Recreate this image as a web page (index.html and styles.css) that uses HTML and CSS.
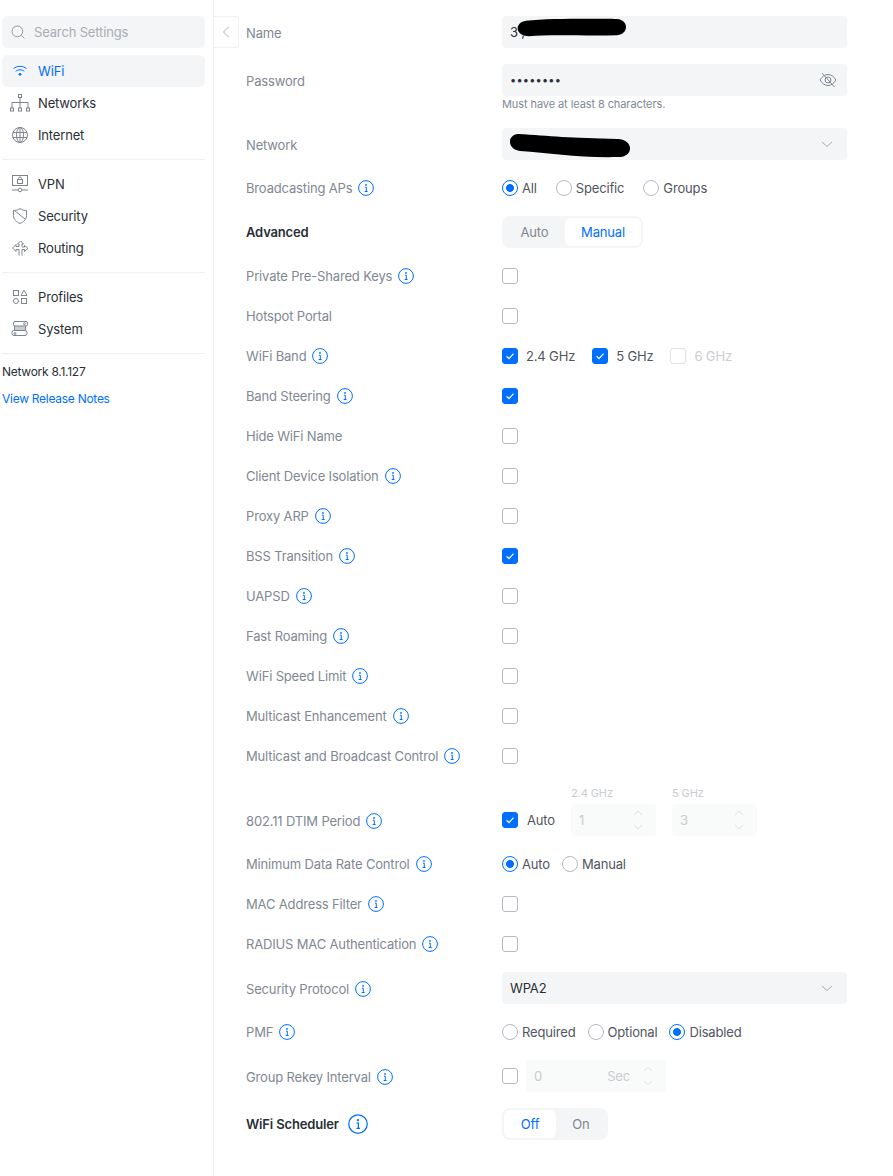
FILE: index.html
```html
<!DOCTYPE html>
<html lang="en">
<head>
<meta charset="utf-8">
<title>WiFi Settings</title>
<link rel="stylesheet" href="styles.css">
</head>
<body>
<svg class="defs" width="0" height="0" aria-hidden="true">
  <symbol id="info" viewBox="0 0 16 16"><circle cx="8" cy="8" r="7.4" fill="none" stroke="#006fff"/><circle cx="8" cy="4.9" r=".9" fill="#006fff"/><path d="M6.9 7.2H8.3V11.4M6.7 11.5H9.6" fill="none" stroke="#006fff"/></symbol>
  <symbol id="tick" viewBox="0 0 16 16"><path d="M4.6 8.3 7 10.6l4.5-5" fill="none" stroke="#fff" stroke-width="1.2"/></symbol>
  <symbol id="chev" viewBox="0 0 16 16"><path d="M3 6l5 4.5L13 6" fill="none" stroke="currentColor"/></symbol>
  <symbol id="up" viewBox="0 0 10 6"><path d="M1 5 5 1.2 9 5" fill="none" stroke="currentColor"/></symbol>
  <symbol id="down" viewBox="0 0 10 6"><path d="M1 1 5 4.8 9 1" fill="none" stroke="currentColor"/></symbol>
</svg>
<div class="page">
  <aside class="sidebar">
    <div class="search">
      <svg class="ico" viewBox="0 0 20 20"><circle cx="9.2" cy="9.2" r="6.7" fill="none" stroke="currentColor"/><path d="M14 14l4 4" stroke="currentColor" fill="none"/></svg>
      <span>Search Settings</span>
    </div>
    <nav class="group">
      <a class="item active"><svg class="ico" viewBox="0 0 20 20"><path d="M3.5 7.6C7 4.6 13 4.6 16.500 7.600M5.700 10.300c2.500-2 6.100-2 8.600 0" fill="none" stroke="currentColor"/><circle cx="10" cy="13.300" r="1.400" fill="currentColor"/></svg>WiFi</a>
      <a class="item"><svg class="ico" viewBox="0 0 20 20"><g fill="none" stroke="currentColor"><rect x="8.500" y="1.500" width="3" height="3"/><path d="M10 4.500V15M2 15.500V9.500H18V15.500"/><rect x=".5" y="15" width="3" height="3"/><rect x="8.500" y="15" width="3" height="3"/><rect x="16.500" y="15" width="3" height="3"/></g></svg>Networks</a>
      <a class="item"><svg class="ico" viewBox="0 0 20 20"><g fill="none" stroke="currentColor"><circle cx="10" cy="10" r="7.500"/><ellipse cx="10" cy="10" rx="3.500" ry="7.500"/><path d="M10 2.500v15M3 7.500h14M3 12.500h14"/></g></svg>Internet</a>
    </nav>
    <nav class="group">
      <a class="item"><svg class="ico" viewBox="0 0 20 20"><g fill="none" stroke="currentColor"><rect x="2.500" y="1.500" width="15" height="10"/><rect x="7.500" y="5.500" width="5" height="4"/><path d="M8.500 5.500V4.500a1.500 1.500 0 0 1 3 0v1M2 16h6M12 16h6"/><circle cx="10" cy="16" r="1.800"/></g></svg>VPN</a>
      <a class="item"><svg class="ico" viewBox="0 0 20 20"><g fill="none" stroke="currentColor"><path d="M10 2.500c2 1.500 4.500 2 6.500 2v5c0 4-3 6.500-6.500 8-3.500-1.500-6.500-4-6.500-8v-5c2 0 4.500-.5 6.500-2z"/><path d="M5 5l10 8"/></g></svg>Security</a>
      <a class="item"><svg class="ico" viewBox="0 0 20 20"><g fill="none" stroke="currentColor"><path d="M10.500 3 7.500 6H9V8.500H6V6.500L2.500 10 6 13.500V11.500H9V17.500M10.500 3l3 3H12V8.500M12 17.500V11.500H14.500V13.500L18 10.500 14.500 7.500V9H12"/></g></svg>Routing</a>
    </nav>
    <nav class="group">
      <a class="item"><svg class="ico" viewBox="0 0 20 20"><g fill="none" stroke="currentColor"><rect x="3.500" y="3.500" width="5" height="5"/><path d="M14 3.200l3 5.300h-6z"/><circle cx="6" cy="14" r="2.500"/><rect x="11.500" y="11.500" width="5" height="5"/></g></svg>Profiles</a>
      <a class="item"><svg class="ico" viewBox="0 0 20 20"><rect x="5" y="7" width="10" height="5" fill="#c9ccd1"/><g fill="none" stroke="currentColor"><path d="M5 2.500h11a1.500 1.500 0 0 1 1.500 1.500v1.500a1.500 1.500 0 0 1-1.500 1.500H5a1.500 1.500 0 0 1-1.500-1.500V4A1.500 1.500 0 0 1 5 2.500zM4 11.500h11a2 2 0 0 1 2 2v1a2 2 0 0 1-2 2H4a2 2 0 0 1-2-2v-1a2 2 0 0 1 2-2z"/><path d="M4.500 7v4.500M15.500 7v4.500"/><circle cx="14.500" cy="4.700" r="1"/><circle cx="5" cy="14.500" r="1"/></g></svg>System</a>
    </nav>
    <p class="version">Network 8.1.127</p>
    <a class="notes">View Release Notes</a>
  </aside>

  <div class="collapse"><svg viewBox="0 0 10 14"><path d="M7.500 2 2.500 7l5 5" fill="none" stroke="currentColor"/></svg></div>

  <main class="form">
    <div class="row field"><span class="label nudge">Name</span>
      <div class="input"><span>3 ,</span><svg class="blob blob-a" viewBox="0 0 110 22" preserveAspectRatio="none"><path d="M9 3 C35 0 85 1 100 1 C112 2 112 18 100 19 C70 20 35 18 12 20 C-2 20 -3 5 9 3z" fill="#000"/></svg></div></div>
    <div class="row field"><span class="label nudge">Password</span>
      <div class="input"><span class="dots">••••••••</span><svg class="eye" viewBox="0 0 18 18"><g fill="none" stroke="currentColor"><path d="M1 9c2-3.500 5-5.500 8-5.500s6 2 8 5.500c-2 3.500-5 5.500-8 5.500S3 12.500 1 9z"/><circle cx="9" cy="9" r="3"/><path d="M3 2l12.500 14"/></g></svg></div></div>
    <div class="row helper"><span></span><small>Must have at least 8 characters.</small></div>
    <div class="row field"><span class="label nudge">Network</span>
      <div class="input"><svg class="blob blob-b" viewBox="0 0 120 25" preserveAspectRatio="none"><path d="M8 1 C40 3 60 5 108 6 C124 7 124 24 108 24 C70 25 40 20 10 18 C-3 16 -3 2 8 1z" fill="#000"/></svg><svg class="chev"><use href="#chev"/></svg></div></div>
    <div class="row short"><span class="label">Broadcasting APs <svg class="info"><use href="#info"/></svg></span>
      <div class="opts wide"><span class="opt"><i class="radio on"></i>All</span><span class="opt"><i class="radio"></i>Specific</span><span class="opt"><i class="radio"></i>Groups</span></div></div>
    <div class="row field advanced"><span class="label strong">Advanced</span>
      <div class="seg"><span class="seg-btn auto">Auto</span><span class="seg-btn manual sel">Manual</span></div></div>

    <div class="checks">
      <div class="row"><span class="label">Private Pre-Shared Keys <svg class="info"><use href="#info"/></svg></span><i class="box"></i></div>
      <div class="row"><span class="label">Hotspot Portal</span><i class="box"></i></div>
      <div class="row"><span class="label">WiFi Band <svg class="info"><use href="#info"/></svg></span>
        <div class="opts bands"><span class="opt"><i class="box on"><svg><use href="#tick"/></svg></i>2.4 GHz</span><span class="opt"><i class="box on"><svg><use href="#tick"/></svg></i>5 GHz</span><span class="opt off"><i class="box"></i>6 GHz</span></div></div>
      <div class="row"><span class="label">Band Steering <svg class="info"><use href="#info"/></svg></span><i class="box on"><svg><use href="#tick"/></svg></i></div>
      <div class="row"><span class="label">Hide WiFi Name</span><i class="box"></i></div>
      <div class="row"><span class="label">Client Device Isolation <svg class="info"><use href="#info"/></svg></span><i class="box"></i></div>
      <div class="row"><span class="label">Proxy ARP <svg class="info"><use href="#info"/></svg></span><i class="box"></i></div>
      <div class="row"><span class="label">BSS Transition <svg class="info"><use href="#info"/></svg></span><i class="box on"><svg><use href="#tick"/></svg></i></div>
      <div class="row"><span class="label">UAPSD <svg class="info"><use href="#info"/></svg></span><i class="box"></i></div>
      <div class="row"><span class="label">Fast Roaming <svg class="info"><use href="#info"/></svg></span><i class="box"></i></div>
      <div class="row"><span class="label">WiFi Speed Limit <svg class="info"><use href="#info"/></svg></span><i class="box"></i></div>
      <div class="row"><span class="label">Multicast Enhancement <svg class="info"><use href="#info"/></svg></span><i class="box"></i></div>
      <div class="row"><span class="label">Multicast and Broadcast Control <svg class="info"><use href="#info"/></svg></span><i class="box"></i></div>
    </div>

    <div class="row dtim"><span class="label">802.11 DTIM Period <svg class="info"><use href="#info"/></svg></span>
      <div class="dtim-ctl">
        <span class="opt dtim-auto"><i class="box on"><svg><use href="#tick"/></svg></i>Auto</span>
        <div class="num-col"><small>2.4 GHz</small><div class="num n-band"><span>1</span><span class="spin"><svg><use href="#up"/></svg><svg><use href="#down"/></svg></span></div></div>
        <div class="num-col"><small>5 GHz</small><div class="num n-band"><span>3</span><span class="spin"><svg><use href="#up"/></svg><svg><use href="#down"/></svg></span></div></div>
      </div></div>

    <div class="checks after-dtim">
      <div class="row"><span class="label">Minimum Data Rate Control <svg class="info"><use href="#info"/></svg></span>
        <div class="opts"><span class="opt"><i class="radio on"></i>Auto</span><span class="opt"><i class="radio"></i>Manual</span></div></div>
      <div class="row"><span class="label">MAC Address Filter <svg class="info"><use href="#info"/></svg></span><i class="box"></i></div>
      <div class="row"><span class="label">RADIUS MAC Authentication <svg class="info"><use href="#info"/></svg></span><i class="box"></i></div>
    </div>

    <div class="row field security"><span class="label nudge">Security Protocol <svg class="info"><use href="#info"/></svg></span>
      <div class="input select"><span>WPA2</span><svg class="chev"><use href="#chev"/></svg></div></div>
    <div class="row pmf"><span class="label">PMF <svg class="info"><use href="#info"/></svg></span>
      <div class="opts"><span class="opt"><i class="radio"></i>Required</span><span class="opt"><i class="radio"></i>Optional</span><span class="opt"><i class="radio on"></i>Disabled</span></div></div>
    <div class="row field rekey"><span class="label nudge">Group Rekey Interval <svg class="info"><use href="#info"/></svg></span>
      <div class="rekey-ctl"><i class="box"></i><div class="num n-rekey"><span>0</span><span class="unit">Sec</span><span class="spin"><svg><use href="#up"/></svg><svg><use href="#down"/></svg></span></div></div></div>
    <div class="row field sched"><span class="label strong">WiFi Scheduler <svg class="info big"><use href="#info"/></svg></span>
      <div class="seg"><span class="seg-btn off-btn sel">Off</span><span class="seg-btn on-btn">On</span></div></div>
  </main>
</div>
</body>
</html>
```
FILE: styles.css
```css
* { box-sizing: border-box; }
html, body { margin: 0; padding: 0; background: #fff; }
body { font: 13px/16px Inter, "Noto Sans", sans-serif; letter-spacing: -.16px; color: #50565e; }
.defs { position: absolute; }
.page { display: flex; align-items: stretch; min-height: 1176px; }

.sidebar { width: 214px; flex: none; border-right: 1px solid #edeff0; padding: 16px 8px 0 2px; }
.search { height: 32px; display: flex; align-items: center; gap: 8px; padding-left: 8px; background: #f4f5f6; border-radius: 6px; color: #a9adb5; }
.search .ico { color: #7e8590; width: 16px; height: 16px; }
.group { padding-bottom: 8px; border-bottom: 1px solid #edeff0; margin-bottom: 8px; }
.search + .group { margin-top: 7px; }
.item { display: flex; align-items: center; height: 32px; gap: 8px; padding-left: 8px; border-radius: 6px; color: #2a2f36; }
.item .ico { width: 20px; height: 20px; flex: none; margin-right: 0; color: #7e8590; }
.item.active { background: #f4f5f6; color: #006fff; }
.item.active .ico { color: #006fff; }
.version { margin: 10px 0 0; font-size: 12px; letter-spacing: -.27px; color: #2a2f36; }
.notes { display: block; margin-top: 11px; font-size: 12px; letter-spacing: -.27px; color: #006fff; }

.collapse { flex: none; width: 25px; height: 32px; margin-top: 16px; border: 1px solid #edeff0; border-left: 0; border-radius: 0 4px 4px 0; display: flex; align-items: center; justify-content: center; color: #a9adb5; }
.collapse svg { width: 10px; height: 14px; }

.form { width: 601px; margin-left: 7px; padding-top: 16px; }
.row { display: flex; align-items: center; height: 40px; }
.label { width: 256px; flex: none; color: #808893; display: flex; align-items: center; gap: 6px; white-space: nowrap; }
.label.strong { color: #2a2f36; font-weight: 600; }
.nudge { position: relative; top: 1px; }
.info { width: 16px; height: 16px; flex: none; }
.info.big { width: 20px; height: 20px; margin-left: 3px; }

.field { height: 32px; margin-bottom: 16px; }
.advanced { margin-bottom: 8px; }
.helper { height: 16px; margin: -16px 0 16px; }
.helper span { width: 256px; flex: none; }
.helper small { font-size: 11px; letter-spacing: -.09px; color: #808893; }
.short { height: 24px; margin-bottom: 16px; }
.input { position: relative; width: 345px; height: 32px; background: #f4f5f6; border-radius: 4px; display: flex; align-items: center; justify-content: space-between; padding: 0 12px 0 8px; color: #2a2f36; }
.dots { font-size: 11px; letter-spacing: .2px; }
.eye { width: 18px; height: 18px; color: #808893; margin-left: auto; margin-right: -2px; }
.chev { width: 16px; height: 16px; color: #a9adb5; margin-left: auto; }
.blob { position: absolute; }
.blob-a { left: 15px; top: 2px; width: 110px; height: 20px; }
.blob-b { left: 8px; top: 5px; width: 120px; height: 25px; }

.opts { display: flex; align-items: center; gap: 12px; }
.opts.wide { gap: 19px; }
.opts.bands { gap: 17px; }
.opt { display: inline-flex; align-items: center; gap: 4px; color: #50565e; }
.opt.off { color: #c9ccd1; }
.opt.off .box { border-color: #dfe1e5; }
.bands .opt { gap: 8px; }

.radio { width: 16px; height: 16px; border-radius: 50%; border: 1px solid #b6b9c4; background: #fff; flex: none; display: block; }
.radio.on { border-color: #006fff; background: radial-gradient(circle, #006fff 0 3.6px, #fff 4.2px); }
.box { width: 16px; height: 16px; flex: none; display: block; border: 1px solid #b6b9c4; border-radius: 3px; background: #fff; }
.box.on { background: #006fff; border-color: #006fff; }
.box.on svg { display: block; width: 16px; height: 16px; margin: -1px; }

.seg { display: flex; background: #f4f5f6; border-radius: 8px; height: 32px; padding: 1px; border: 1px solid #f4f5f6; }
.seg-btn { display: flex; align-items: center; justify-content: center; color: #808893; border-radius: 6px; }
.seg-btn.sel { background: #fff; color: #006fff; }
.auto { width: 61px; }
.manual { width: 76px; }
.off-btn { width: 52px; }
.on-btn { width: 50px; }

.dtim { height: 60px; align-items: flex-end; }
.dtim .label { height: 30px; }
.dtim-ctl { display: flex; align-items: flex-end; height: 60px; }
.dtim-auto { gap: 9px; width: 69px; height: 32px; }
.num-col { width: 101px; }
.num-col small { display: block; font-size: 11px; letter-spacing: -.09px; color: #c9ccd1; height: 18px; line-height: 14px; }
.num { height: 32px; border-radius: 4px; background: #f9fafa; color: #c9ccd1; display: flex; align-items: center; padding: 0 13px 0 8px; }
.n-band { width: 85px; }
.spin { margin-left: auto; display: flex; flex-direction: column; gap: 8px; color: #dfe1e5; width: 10px; }
.spin svg { display: block; width: 10px; height: 6px; }

.after-dtim { margin-top: 8px; margin-bottom: 8px; }
.security { margin-bottom: 8px; }
.pmf { margin-bottom: 8px; }
.rekey-ctl { display: flex; align-items: center; gap: 8px; }
.n-rekey { width: 140px; }
.unit { margin-left: auto; margin-right: 13px; }
.n-rekey .spin { margin-left: 0; }
```
